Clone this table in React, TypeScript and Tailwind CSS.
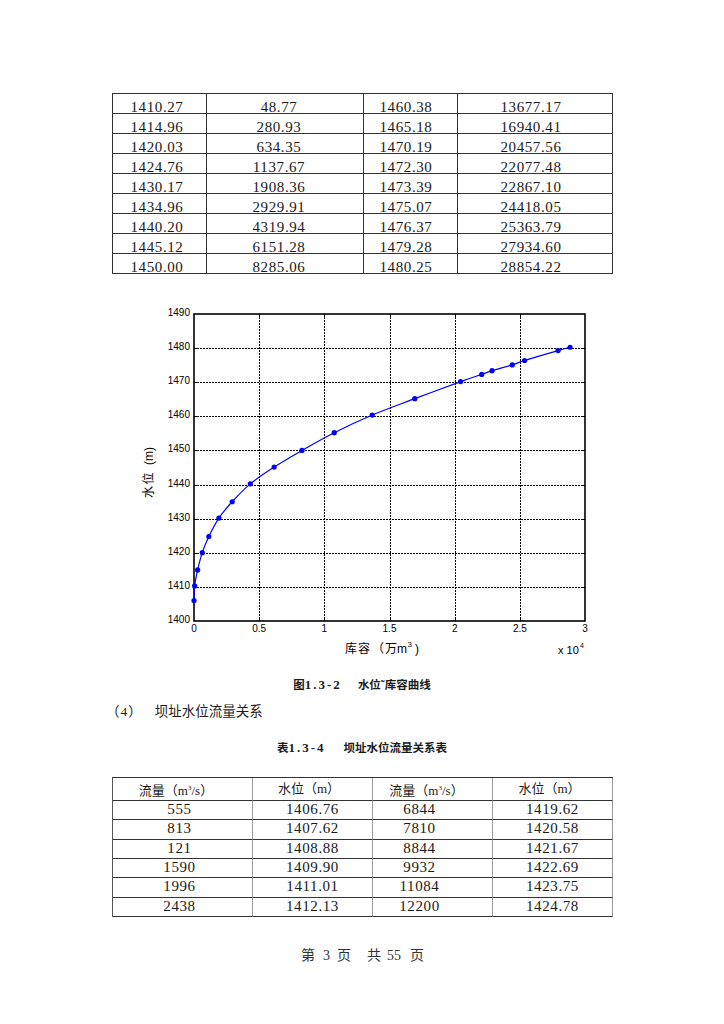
import React from "react";

const top: string[][] = [
  ["1410.27", "48.77", "1460.38", "13677.17"],
  ["1414.96", "280.93", "1465.18", "16940.41"],
  ["1420.03", "634.35", "1470.19", "20457.56"],
  ["1424.76", "1137.67", "1472.30", "22077.48"],
  ["1430.17", "1908.36", "1473.39", "22867.10"],
  ["1434.96", "2929.91", "1475.07", "24418.05"],
  ["1440.20", "4319.94", "1476.37", "25363.79"],
  ["1445.12", "6151.28", "1479.28", "27934.60"],
  ["1450.00", "8285.06", "1480.25", "28854.22"],
];

const bottom: string[][] = [
  ["555", "1406.76", "6844", "1419.62"],
  ["813", "1407.62", "7810", "1420.58"],
  ["121", "1408.88", "8844", "1421.67"],
  ["1590", "1409.90", "9932", "1422.69"],
  ["1996", "1411.01", "11084", "1423.75"],
  ["2438", "1412.13", "12200", "1424.78"],
];

const curve: [number, number][] = [
  [0, 1406],
  [48.77, 1410.27],
  [280.93, 1414.96],
  [634.35, 1420.03],
  [1137.67, 1424.76],
  [1908.36, 1430.17],
  [2929.91, 1434.96],
  [4319.94, 1440.2],
  [6151.28, 1445.12],
  [8285.06, 1450.0],
  [10760, 1455.2],
  [13677.17, 1460.38],
  [16940.41, 1465.18],
  [20457.56, 1470.19],
  [22077.48, 1472.3],
  [22867.1, 1473.39],
  [24418.05, 1475.07],
  [25363.79, 1476.37],
  [27934.6, 1479.28],
  [28854.22, 1480.25],
];

const X0 = 194;
const X1 = 585;
const Y0 = 314;
const Y1 = 621;
const px = (v: number) => X0 + (v * (X1 - X0)) / 30000;
const py = (l: number) => Y1 - ((l - 1400) * (Y1 - Y0)) / 90;

function buildPath(p: [number, number][]) {
  let d = `M${p[0][0].toFixed(2)},${p[0][1].toFixed(2)}`;
  for (let i = 0; i < p.length - 1; i++) {
    const p0 = p[i - 1] || p[i];
    const p1 = p[i];
    const p2 = p[i + 1];
    const p3 = p[i + 2] || p2;
    const c1x = p1[0] + (p2[0] - p0[0]) / 6;
    const c1y = p1[1] + (p2[1] - p0[1]) / 6;
    const c2x = p2[0] - (p3[0] - p1[0]) / 6;
    const c2y = p2[1] - (p3[1] - p1[1]) / 6;
    d += ` C${c1x.toFixed(2)},${c1y.toFixed(2)} ${c2x.toFixed(2)},${c2y.toFixed(2)} ${p2[0].toFixed(2)},${p2[1].toFixed(2)}`;
  }
  return d;
}

function Chart() {
  const pts = curve.map(([v, l]) => [px(v), py(l)] as [number, number]);
  const xs = [0, 0.5, 1, 1.5, 2, 2.5, 3];
  const ys = [1400, 1410, 1420, 1430, 1440, 1450, 1460, 1470, 1480, 1490];
  const sans = "Liberation Sans, Arial, sans-serif";
  const cjk = "Noto Sans CJK SC, sans-serif";
  return (
    <svg width={724} height={396} viewBox="0 274 724 396" className="block">
      {xs.slice(1, -1).map((x) => {
        const gx = Math.round(X0 + (x / 3) * (X1 - X0)) + 0.5;
        return (
          <g key={"vx" + x}>
            <line x1={gx} y1={Y0} x2={gx} y2={Y1} stroke="#000" strokeWidth={1} strokeDasharray="2 1" shapeRendering="crispEdges" />
            <line x1={gx} y1={Y1} x2={gx} y2={Y1 - 4} stroke="#000" strokeWidth={1} shapeRendering="crispEdges" />
            <line x1={gx} y1={Y0} x2={gx} y2={Y0 + 4} stroke="#000" strokeWidth={1} shapeRendering="crispEdges" />
          </g>
        );
      })}
      {ys.slice(1, -1).map((l) => {
        const gy = Math.round(py(l)) + 0.5;
        return (
          <g key={"hy" + l}>
            <line x1={X0} y1={gy} x2={X1} y2={gy} stroke="#000" strokeWidth={1} strokeDasharray="2 1" shapeRendering="crispEdges" />
            <line x1={X0} y1={gy} x2={X0 + 4} y2={gy} stroke="#000" strokeWidth={1} shapeRendering="crispEdges" />
            <line x1={X1 - 4} y1={gy} x2={X1} y2={gy} stroke="#000" strokeWidth={1} shapeRendering="crispEdges" />
          </g>
        );
      })}
      <rect x={X0} y={Y0} width={X1 - X0} height={Y1 - Y0} fill="none" stroke="#000" strokeWidth={1.6} />
      <path d={buildPath(pts)} fill="none" stroke="#0000ff" strokeWidth={1.2} />
      {pts.map(([x, y], i) => (
        <circle key={i} cx={x} cy={y} r={2.6} fill="#0000ff" />
      ))}
      {ys.map((l) => (
        <text key={"yl" + l} x={190} y={Math.round(py(l)) + 2} textAnchor="end" fontFamily={sans} fontSize={10} fill="#000">
          {l}
        </text>
      ))}
      {xs.map((x) => (
        <text key={"xl" + x} x={X0 + (x / 3) * (X1 - X0)} y={631.5} textAnchor="middle" fontFamily={sans} fontSize={10} fill="#000">
          {x}
        </text>
      ))}
      <text x={345} y={652.5} fontFamily={cjk} fontSize={12} fill="#000" letterSpacing={1}>
        库容
      </text>
      <text x={372} y={652.5} fontFamily={cjk} fontSize={12} fill="#000">
        （
      </text>
      <text x={385} y={652.5} fontFamily={cjk} fontSize={12} fill="#000">
        万
      </text>
      <text x={397} y={652.5} fontFamily={sans} fontSize={12} fill="#000">
        m
      </text>
      <text x={407.5} y={647} fontFamily={sans} fontSize={8} fill="#000">
        3
      </text>
      <text x={415} y={652.5} fontFamily={sans} fontSize={12} fill="#000">
        )
      </text>
      <text x={558} y={654} fontFamily={sans} fontSize={11} fill="#000">
        x 10
      </text>
      <text x={580} y={648} fontFamily={sans} fontSize={7} fill="#000">
        4
      </text>
      <g transform="translate(152.5,498) rotate(-90)">
        <text x={0} y={0} fontFamily={cjk} fontSize={12} fill="#000" letterSpacing={1.5}>
          水位
        </text>
        <text x={33} y={0} fontFamily={sans} fontSize={12} fill="#000">
          (m)
        </text>
      </g>
    </svg>
  );
}

export default function App() {
  const topCols = ["w-[94px] pr-[5px]", "w-[157px] pr-[12px]", "w-[94px] pr-[9px]", "w-[155px] pr-[8px]"];
  const botCols = ["w-[140px] pr-[6px]", "w-[120px] pr-[0px]", "w-[120px] pr-[26px]", "w-[120px] pr-[0px]"];
  const botHead = ["w-[140px] pr-[13px]", "w-[120px] pr-[7px]", "w-[120px] pr-[12px]", "w-[120px] pr-[6px]"];
  const botHeights = ["h-[19px]", "h-[20px]", "h-[19px]", "h-[19px]", "h-[20px]", "h-[19px]"];

  return (
    <div className="w-[724px] h-[1024px] bg-white overflow-hidden text-[#1a1a1a] [font-family:'Liberation_Serif','Noto_Sans_CJK_SC',serif]">
      {/* top table */}
      <div className="pt-[93px] pl-[112px]">
        <div className="w-[501px] border-t border-l border-[#333]">
          {top.map((row, r) => (
            <div key={r} className="flex">
              {row.map((c, i) => (
                <div
                  key={i}
                  className={`${topCols[i]} h-[20px] border-r border-b border-[#333] text-center text-[15px] tracking-[0.6px] pt-[7px] leading-[12px]`}
                >
                  {c}
                </div>
              ))}
            </div>
          ))}
        </div>
      </div>

      {/* chart */}
      <Chart />

      {/* figure caption */}
      <div className="h-[30px] leading-[30px] text-center text-[11.5px] font-bold">
        图<span className="text-[13px] tracking-[2px]">1.3-2</span>
        <span className="inline-block w-[16px]"></span>水位˜库容曲线
      </div>

      {/* section heading */}
      <div className="h-[24px] leading-[24px] pl-[106px] text-[13.5px] flex">
        <span>（</span>
        <span className="px-[1px]">4</span>
        <span>）</span>
        <span className="ml-[13px]">坝址水位流量关系</span>
      </div>

      {/* table title */}
      <div className="h-[12px]"></div>
      <div className="h-[24px] leading-[24px] text-center text-[11.5px] font-bold">
        表<span className="text-[13px] tracking-[2px]">1.3-4</span>
        <span className="inline-block w-[18px]"></span>坝址水位流量关系表
      </div>
      <div className="h-[17px]"></div>

      {/* bottom table */}
      <div className="pl-[112px]">
        <div className="w-[501px] border-t border-l border-t-[#333] border-l-[#555]">
          <div className="flex">
            {[0, 1, 2, 3].map((i) => (
              <div
                key={i}
                className={`${botHead[i]} h-[23px] border-r border-b border-r-[#999] border-b-[#333] text-center text-[13px] leading-[21px]`}
              >
                {i % 2 === 0 ? (
                  <>
                    流量（m<span className="text-[7px] align-[5px]">3</span>/s）
                  </>
                ) : (
                  <>水位（m）</>
                )}
              </div>
            ))}
          </div>
          {bottom.map((row, r) => (
            <div key={r} className="flex">
              {row.map((c, i) => (
                <div
                  key={i}
                  className={`${botCols[i]} ${botHeights[r]} border-r border-b border-r-[#999] border-b-[#333] text-center text-[15px] tracking-[0.6px] pt-[2px] leading-[12px]`}
                >
                  {c}
                </div>
              ))}
            </div>
          ))}
        </div>
      </div>

      {/* footer */}
      <div className="h-[27px]"></div>
      <div className="h-[24px] leading-[24px] flex pl-[301px] text-[14px] text-[#333]">
        <span>第</span>
        <span className="ml-[8px]">3</span>
        <span className="ml-[7px]">页</span>
        <span className="ml-[16px]">共</span>
        <span className="ml-[6px]">55</span>
        <span className="ml-[9px]">页</span>
      </div>
    </div>
  );
}
